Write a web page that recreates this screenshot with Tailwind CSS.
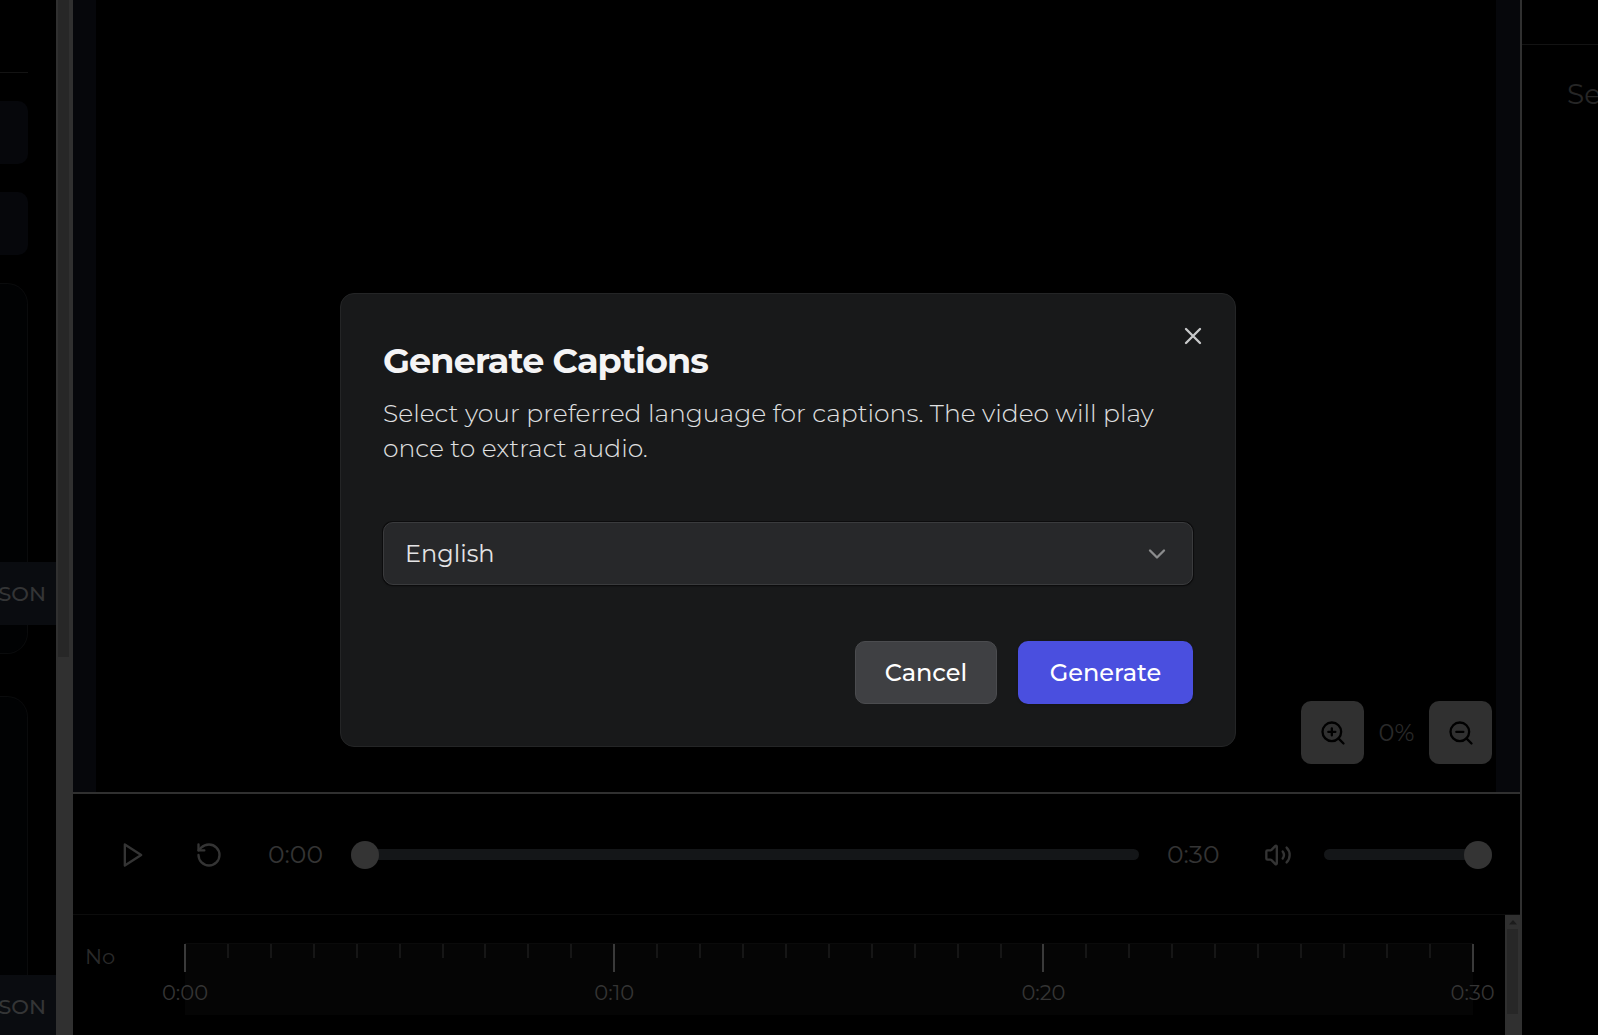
<!DOCTYPE html>
<html lang="en">
<head>
  <meta charset="UTF-8" />
  <meta name="viewport" content="width=device-width, initial-scale=1.0" />
  <title>Generate Captions</title>
  <script src="https://cdn.jsdelivr.net/npm/@tailwindcss/browser@4"></script>
</head>
<body class="bg-black font-[Montserrat,Inter,sans-serif] text-[25px] text-[#343434]">
  <div class="flex h-screen overflow-hidden">

    <!-- Left sidebar -->
    <aside class="flex w-[73px] shrink-0">
      <div class="flex w-14 flex-col overflow-hidden pr-7">
        <div class="h-[73px] shrink-0 border-b border-[#131313]"></div>
        <div class="mt-7 h-[63px] shrink-0 rounded-r-[10px] bg-[#06070b]"></div>
        <div class="mt-7 h-[63px] shrink-0 rounded-r-[10px] bg-[#06070b]"></div>
        <div class="mt-7 h-[371px] shrink-0 rounded-r-[21px] border-y border-r border-[#0a0b0c] bg-[#010203] pt-[278px]">
          <button class="-mr-[29px] flex h-[63px] w-14 items-center justify-end bg-[#0a0c10] pr-[10px] text-[21px] font-medium text-[#343536]">JSON</button>
        </div>
        <div class="mt-[42px] h-[371px] shrink-0 rounded-r-[21px] border-y border-r border-[#0a0b0c] bg-[#010203] pt-[278px]">
          <button class="-mr-[29px] flex h-[63px] w-14 items-center justify-end bg-[#0a0c10] pr-[10px] text-[21px] font-medium text-[#343536]">JSON</button>
        </div>
      </div>
      <!-- Scrollbar -->
      <div class="w-[17px] bg-[#303030] pr-1 pl-[2px]">
        <div class="h-[657px] bg-[#272727]"></div>
      </div>
    </aside>

    <!-- Player -->
    <main class="flex min-w-0 flex-1 flex-col border-r-2 border-[#303030]">
      <section class="relative flex-1 border-b-2 border-[#303030] bg-[#06070b] pr-6 pl-[23px]">
        <div class="h-full bg-black"></div>
        <div class="absolute right-7 bottom-7 flex items-center gap-[14px]">
          <button aria-label="Zoom in" class="flex size-[63px] items-center justify-center rounded-[10px] bg-[#303030] text-black">
            <svg class="size-7" viewBox="0 0 24 24" fill="none" stroke="currentColor" stroke-width="2" stroke-linecap="round" stroke-linejoin="round"><circle cx="11" cy="11" r="8"/><path d="m21 21-4.35-4.35M11 8v6M8 11h6"/></svg>
          </button>
          <span class="w-[37px] text-center text-[24px] text-[#2a2a2a]"><span class="-mx-2">0%</span></span>
          <button aria-label="Zoom out" class="flex size-[63px] items-center justify-center rounded-[10px] bg-[#303030] text-black">
            <svg class="size-7" viewBox="0 0 24 24" fill="none" stroke="currentColor" stroke-width="2" stroke-linecap="round" stroke-linejoin="round"><circle cx="11" cy="11" r="8"/><path d="m21 21-4.35-4.35M8 11h6"/></svg>
          </button>
        </div>
      </section>

      <!-- Controls -->
      <section class="flex h-[121px] items-center border-b border-[#0c0c0c] px-7 pt-px">
        <button aria-label="Play" class="flex size-[63px] shrink-0 items-center justify-center">
          <svg class="size-7" viewBox="0 0 24 24" fill="none" stroke="currentColor" stroke-width="2" stroke-linecap="round" stroke-linejoin="round"><path d="m5 3 14 9-14 9z"/></svg>
        </button>
        <button aria-label="Restart" class="ml-[13px] flex size-[63px] shrink-0 items-center justify-center">
          <svg class="size-7" viewBox="0 0 24 24" fill="none" stroke="currentColor" stroke-width="2" stroke-linecap="round" stroke-linejoin="round"><path d="M3 12a9 9 0 1 0 9-9 9.750 9.750 0 0 0-6.740 2.740L3 8"/><path d="M3 3v5h5"/></svg>
        </button>
        <span class="ml-7 w-[55px]">0:00</span>
        <input type="range" aria-label="Seek" min="0" max="30" value="0" class="ml-7 h-[11px] min-w-0 flex-1 appearance-none rounded-full bg-[#141618] [&::-webkit-slider-thumb]:size-7 [&::-webkit-slider-thumb]:appearance-none [&::-webkit-slider-thumb]:rounded-full [&::-webkit-slider-thumb]:bg-[#343434]" />
        <span class="ml-7 w-[52px]">0:30</span>
        <button aria-label="Mute" class="ml-[27px] flex size-[63px] shrink-0 items-center justify-center">
          <svg class="size-7" viewBox="0 0 24 24" fill="none" stroke="currentColor" stroke-width="2" stroke-linecap="round" stroke-linejoin="round"><path d="M11 4.702a.705.705 0 0 0-1.203-.498L6.413 7.587A1.4 1.4 0 0 1 5.416 8H3a1 1 0 0 0-1 1v6a1 1 0 0 0 1 1h2.416a1.4 1.4 0 0 1 .997.413l3.383 3.384A.705.705 0 0 0 11 19.298z"/><path d="M16 9a5 5 0 0 1 0 6"/><path d="M19.364 18.364a9 9 0 0 0 0-12.728"/></svg>
        </button>
        <input type="range" aria-label="Volume" min="0" max="100" value="100" class="ml-[15px] h-[11px] w-[168px] appearance-none rounded-full bg-[#141618] [&::-webkit-slider-thumb]:size-7 [&::-webkit-slider-thumb]:appearance-none [&::-webkit-slider-thumb]:rounded-full [&::-webkit-slider-thumb]:bg-[#343434]" />
      </section>

      <!-- Timeline -->
      <section class="flex h-[120px]">
        <div class="w-28 pt-7 pl-[12px] text-[21px] leading-7 text-[#2a2a2a]">No</div>
        <div class="mt-7 mr-8 h-[72px] flex-1 border-t border-[#0a0a0a] bg-[#050505]">
          <div id="ruler" class="flex justify-between"></div>
        </div>
        <!-- Scrollbar -->
        <div class="flex w-[15px] flex-col items-center bg-[#303030]">
          <svg class="h-[14px] w-2" viewBox="0 0 8 14"><path d="M0 9.500 4 5l4 4.500z" fill="#1c1c1c"/></svg>
          <div class="h-[85px] w-[11px] bg-[#272727]"></div>
        </div>
      </section>
    </main>

    <!-- Right panel -->
    <aside class="w-[76px] shrink-0 overflow-hidden">
      <div class="h-[45px] border-b border-[#131313]"></div>
      <p class="pt-8 pl-[45px] text-[28px] leading-[35px] whitespace-nowrap text-[#262626]">Select</p>
    </aside>
  </div>

  <!-- Dialog -->
  <div class="fixed inset-0 flex items-center justify-center pt-[5px] pr-[22px]">
    <div role="dialog" aria-labelledby="dialog-title" class="relative w-full max-w-[896px] rounded-[14px] border border-[#242526] bg-[#18191a] p-[42px]">
      <h2 id="dialog-title" class="text-[35px] leading-[50px] font-bold tracking-tight text-[#f4f4f5]">Generate Captions</h2>
      <p class="mt-[10px] text-[25px] leading-[35px] font-light text-[#e0e1e2]">Select your preferred language for captions. The video will play once to extract audio.</p>

      <div class="relative mt-14">
        <select aria-label="Caption language" class="h-[63px] w-full appearance-none rounded-[10px] border border-[#3a3b3d] bg-[#27282a] px-[21px] text-[24px] text-[#e4e4e5] shadow-[0_0_0_1px_#0c0c0d,0_1px_2px_#0008]">
          <option>English</option>
        </select>
        <svg class="pointer-events-none absolute top-[18px] right-[22px] size-7 text-[#8b8c8d]" viewBox="0 0 24 24" fill="none" stroke="currentColor" stroke-width="2" stroke-linecap="round" stroke-linejoin="round"><path d="m6 9 6 6 6-6"/></svg>
      </div>

      <div class="mt-14 flex justify-end gap-[21px]">
        <button class="h-[63px] w-[142px] rounded-[10px] border border-[#4b4c4f] bg-[#3f4043] text-[24px] font-medium text-white">Cancel</button>
        <button class="h-[63px] w-[175px] rounded-[10px] bg-[#4a4fdf] text-[24px] font-medium text-white shadow-sm">Generate</button>
      </div>

      <button aria-label="Close" class="absolute top-7 right-7 text-[#c8c9ca]">
        <svg class="size-7" viewBox="0 0 24 24" fill="none" stroke="currentColor" stroke-width="2" stroke-linecap="round" stroke-linejoin="round"><path d="M18 6 6 18M6 6l12 12"/></svg>
      </button>
    </div>
  </div>

  <script>
    // One tick per second, a long one with a label every ten
    const DURATION = 30;
    const ruler = document.getElementById('ruler');

    for (let s = 0; s <= DURATION; s++) {
      const tick = document.createElement('div');
      tick.className = 'flex w-0 flex-col items-center';
      if (s % 10 === 0) {
        tick.innerHTML = `
          <span class="h-7 w-[2px] bg-[#3a3a3a]"></span>
          <span class="mt-[7px] text-[21px] leading-7">0:${String(s).padStart(2, '0')}</span>
        `;
      } else {
        tick.innerHTML = '<span class="h-[14px] w-[2px] bg-[#161616]"></span>';
      }
      ruler.appendChild(tick);
    }
  </script>
</body>
</html>
